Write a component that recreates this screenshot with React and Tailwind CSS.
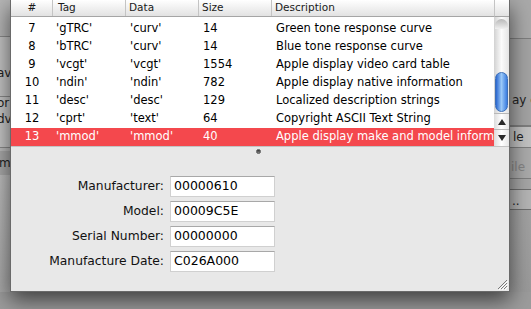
import React from "react";

const rows = [
  ["7", "'gTRC'", "'curv'", "14", "Green tone response curve"],
  ["8", "'bTRC'", "'curv'", "14", "Blue tone response curve"],
  ["9", "'vcgt'", "'vcgt'", "1554", "Apple display video card table"],
  ["10", "'ndin'", "'ndin'", "782", "Apple display native information"],
  ["11", "'desc'", "'desc'", "129", "Localized description strings"],
  ["12", "'cprt'", "'text'", "64", "Copyright ASCII Text String"],
  ["13", "'mmod'", "'mmod'", "40", "Apple display make and model information"],
];

const fields = [
  ["Manufacturer:", "00000610"],
  ["Model:", "00009C5E"],
  ["Serial Number:", "00000000"],
  ["Manufacture Date:", "C026A000"],
];

const font = { fontFamily: '"DejaVu Sans", "Liberation Sans", sans-serif' };

function LeftStrip() {
  return (
    <div className="w-[10px] flex flex-col overflow-hidden text-[12px] leading-none text-[#222] whitespace-nowrap">
      <div className="h-[37px] bg-[#b5b5b5] border-b border-[#8a8a8a]" />
      <div className="h-[60px] bg-[#c4c4c4] border-b border-[#8a8a8a] pt-[30px] ml-[-3px]">av</div>
      <div className="h-[51px] bg-[#c6c6c6] border-b border-[#8a8a8a] flex flex-col ml-[-3px] pt-[0px] gap-[4px]">
        <span>or</span>
        <span>dv</span>
      </div>
      <div className="h-[3px] bg-[#bdbdbd]" />
      <div className="h-[24px] bg-[#a9a9a9] pt-[6px] ml-[-1px]">m</div>
      <div className="flex-1 bg-gradient-to-b from-[#bdbdbd] to-[#a8a8a8]" />
    </div>
  );
}

function RightStrip() {
  return (
    <div className="w-[21px] flex flex-col overflow-hidden text-[12px] leading-none text-[#222] whitespace-nowrap">
      <div className="h-[39px] bg-[#a9a9a9] border-b border-[#7e7e7e]" />
      <div className="h-[88px] bg-[#a3a3a3] border-b-2 border-[#7e7e7e] pt-[55px] pl-[2px]">ay c</div>
      <div className="h-[21px] bg-[#c2c2c2] border-b border-[#7e7e7e] pt-[4px] pl-[3px]">le</div>
      <div className="h-[31px] bg-[#aaaaaa] border-b border-[#7e7e7e] pt-[13px] pl-[1px] text-[#858585]">ile</div>
      <div className="h-[11px] bg-[#a6a6a6] border-b border-[#6e6e6e]" />
      <div className="h-[20px] bg-[#b4b4b4] border-b border-[#6e6e6e] pt-[5px] pl-[2px]">..</div>
      <div className="flex-1 bg-gradient-to-b from-[#a2a2a2] to-[#9a9a9a]" />
    </div>
  );
}

function Scrollbar() {
  return (
    <div className="w-[15px] flex flex-col">
      <div className="h-[17px] border-l border-[#c4c4c4] border-b border-b-[#a5a5a5] bg-gradient-to-b from-white to-[#e2e2e2]" />
      <div className="h-[129px] flex flex-col bg-gradient-to-r from-[#d2d2d2] via-[#fbfbfb] to-[#e4e4e4]">
        <div className="h-[55px] flex flex-col">
          <div className="h-[10px] mt-[2px] mx-[1px] rounded-t-full bg-gradient-to-b from-[#b8b8b8] to-[#f0f0f0]" />
        </div>
        <div className="h-[40px] mx-[1px] rounded-full bg-gradient-to-r from-[#2a66cf] via-[#9ac8f7] to-[#3a7ce0] border border-[#3c6fb8]" />
        <div className="h-[1px]" />
        <div className="h-[16px] flex items-center justify-center border-t border-[#b8b8b8] bg-gradient-to-r from-[#dcdcdc] via-white to-[#e6e6e6]">
          <svg width="8" height="6" viewBox="0 0 8 6"><path d="M4 0 L8 6 L0 6 Z" fill="#2a2a2a" /></svg>
        </div>
        <div className="h-[17px] flex items-center justify-center border-t border-[#b8b8b8] bg-gradient-to-r from-[#dcdcdc] via-white to-[#e6e6e6]">
          <svg width="8" height="6" viewBox="0 0 8 6"><path d="M0 0 L8 0 L4 6 Z" fill="#2a2a2a" /></svg>
        </div>
      </div>
    </div>
  );
}

function Table() {
  const cols = "grid grid-cols-[42px_73px_73px_73px_224px]";
  return (
    <div className="flex-1 flex flex-col min-w-0 overflow-hidden">
      <div className={`${cols} h-[17px] border-b border-[#a5a5a5] bg-gradient-to-b from-white to-[#e2e2e2] text-[10.5px] text-[#1a1a1a]`}>
        <div className="flex items-center justify-center border-r border-[#c4c4c4] pl-[1px]">#</div>
        <div className="flex items-center pl-[5px] border-r border-[#c4c4c4]">Tag</div>
        <div className="flex items-center pl-[3px] border-r border-[#c4c4c4]">Data</div>
        <div className="flex items-center pl-[3px] border-r border-[#c4c4c4]">Size</div>
        <div className="flex items-center pl-[3px]">Description</div>
      </div>
      <div className="flex-1 bg-white pt-[3px] text-[11.5px]">
        {rows.map((r, i) => {
          const sel = i === rows.length - 1;
          return (
            <div
              key={r[0]}
              className={`${cols} h-[18px] items-center whitespace-nowrap ${sel ? "bg-[#f4484d] text-white" : "text-black"}`}
            >
              <div className="text-center">{r[0]}</div>
              <div className="pl-[3px]">{r[1]}</div>
              <div className="pl-[4px]">{r[2]}</div>
              <div className="pl-[4px]">{r[3]}</div>
              <div className="pl-[4px] overflow-hidden">{r[4]}</div>
            </div>
          );
        })}
      </div>
    </div>
  );
}

function Sheet() {
  return (
    <div className="absolute left-[10px] top-0 w-[500px] h-[292px] flex flex-col bg-[#e8e8e8] border-x border-b border-[#6a6a6a] shadow-[0_8px_20px_rgba(0,0,0,0.6)]">
      <div className="h-[147px] flex border-b border-[#c3c3c3]">
        <Table />
        <Scrollbar />
      </div>
      <div className="flex-1 flex flex-col">
        <div className="pt-[2px] h-[8px] flex justify-center">
          <div className="ml-[-4px] w-[5px] h-[5px] rounded-full bg-gradient-to-b from-[#333] to-[#888] border border-[#555]" />
        </div>
        <div className="mt-[21px] grid grid-cols-[153px_105px] gap-x-[6px] gap-y-[4px]">
          {fields.map(([l, v]) => (
            <React.Fragment key={l}>
              <div className="h-[21px] flex items-center justify-end text-[12.3px] text-[#111]">{l}</div>
              <div className="h-[21px] flex items-center bg-white border border-[#d0d0d0] border-t-[#a8a8a8] pl-[3px] text-[12.5px] text-black">
                {v}
              </div>
            </React.Fragment>
          ))}
        </div>
        <div className="flex-1 flex justify-end items-end pr-[1px] pb-[1px]">
          <svg width="11" height="11" viewBox="0 0 11 11">
            <path d="M10 1 L1 10 M10 4 L4 10 M10 7 L7 10" stroke="#7a7a7a" strokeWidth="1" />
            <path d="M11 2 L2 11 M11 5 L5 11 M11 8 L8 11" stroke="#fff" strokeWidth="1" />
          </svg>
        </div>
      </div>
    </div>
  );
}

export default function App() {
  return (
    <div className="relative w-[531px] h-[309px] overflow-hidden bg-[#9c9c9c]" style={font}>
      <div className="flex h-[292px]">
        <LeftStrip />
        <div className="w-[500px] bg-[#b0b0b0]" />
        <RightStrip />
      </div>
      <Sheet />
    </div>
  );
}
